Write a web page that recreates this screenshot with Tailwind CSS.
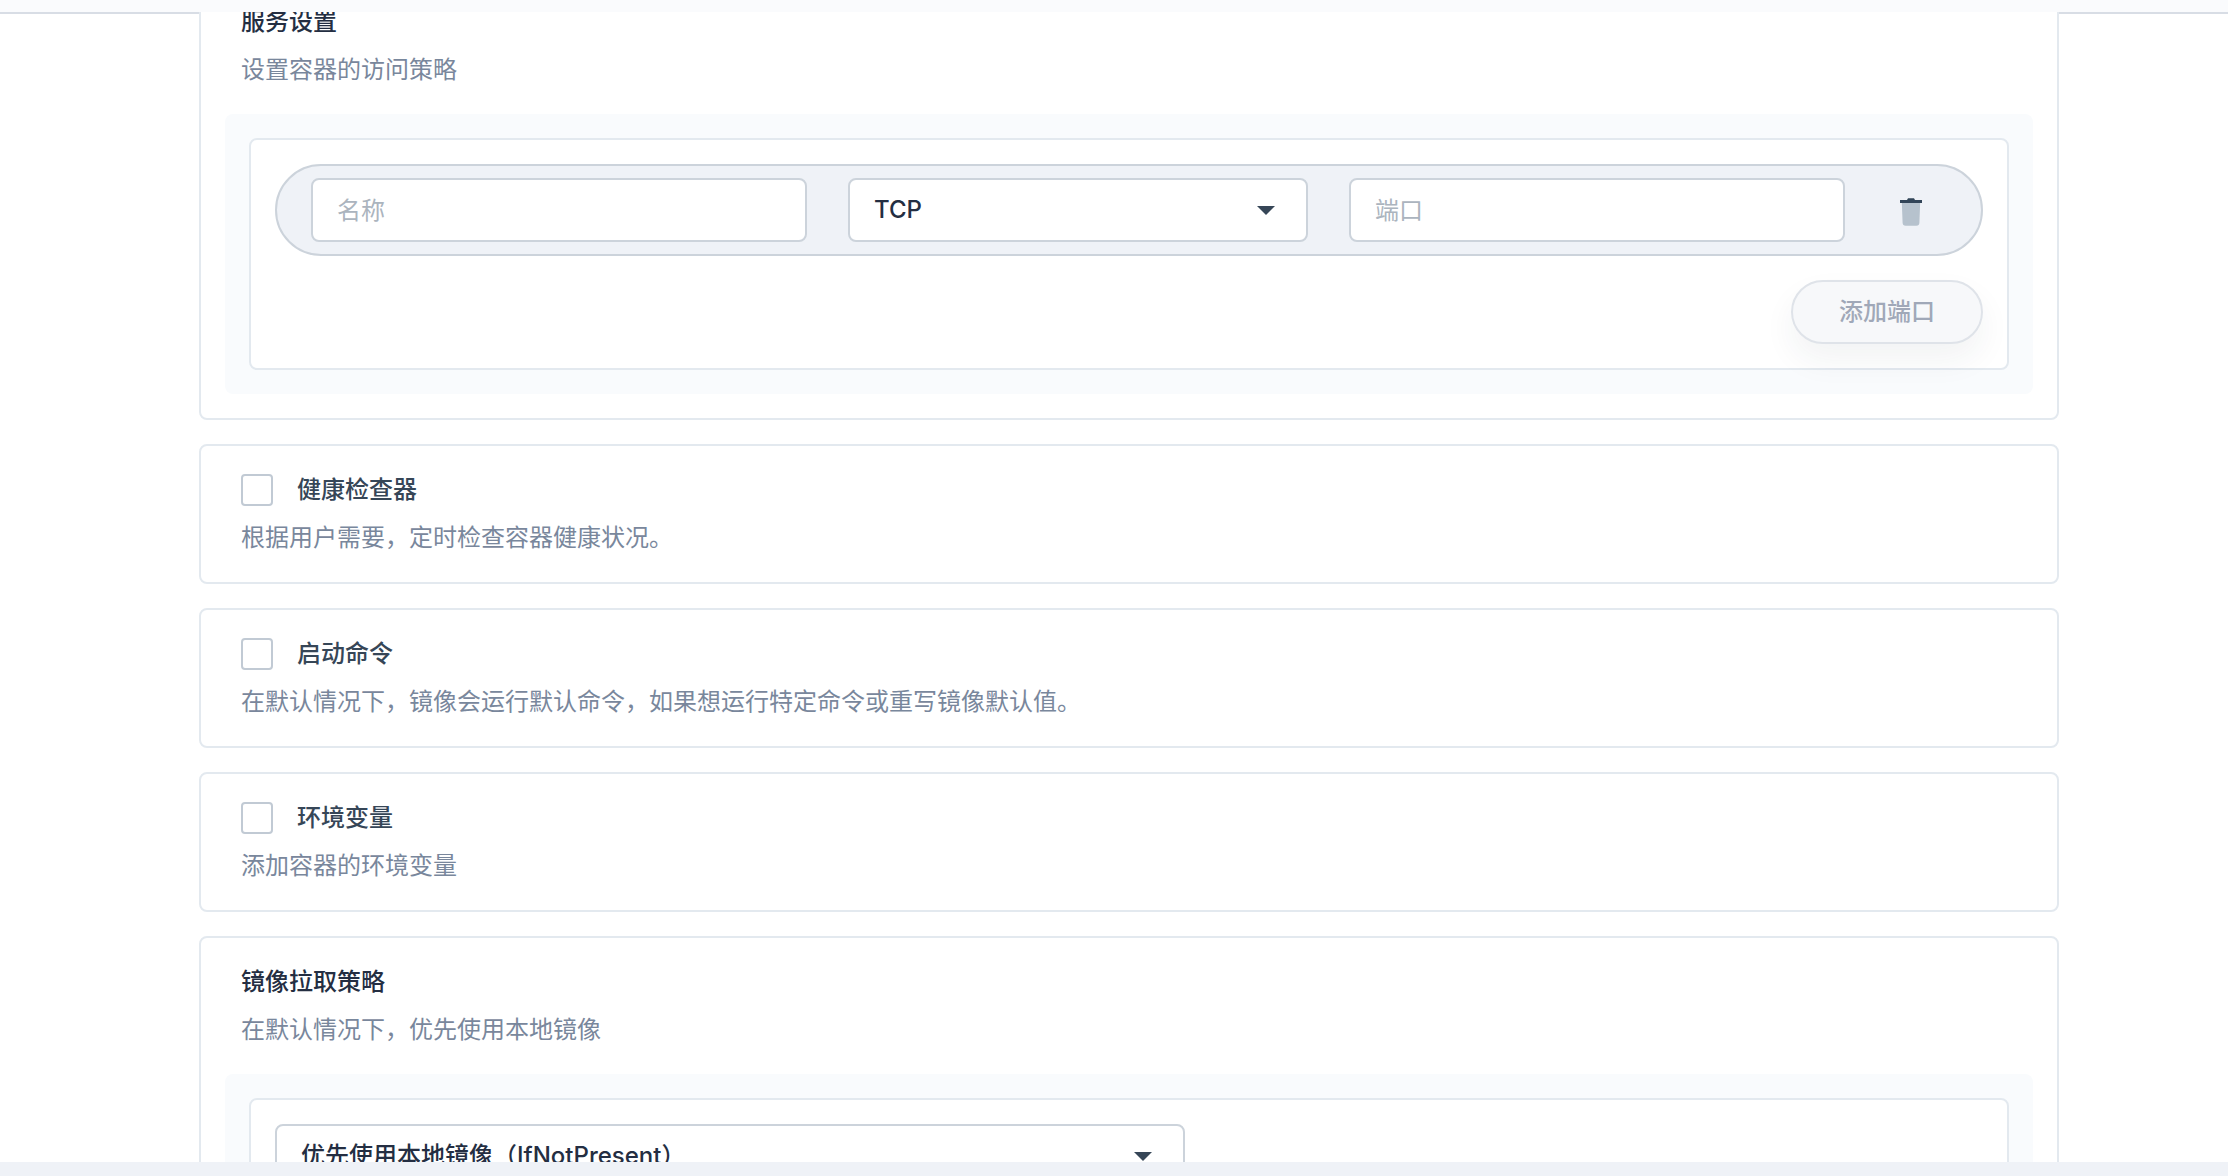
<!DOCTYPE html>
<html lang="zh-CN">
<head>
<meta charset="utf-8">
<meta name="viewport" content="width=device-width, initial-scale=1">
<title>容器设置</title>
<script src="https://cdn.jsdelivr.net/npm/@tailwindcss/browser@4"></script>
</head>
<body class="flex h-screen flex-col overflow-hidden bg-[#eff2f7] font-[Inter,'Noto_Sans_CJK_SC',sans-serif] text-2xl/8 text-[#242e42]">
  <header class="h-3 shrink-0 bg-[#fafbfd]"></header>
  <main class="min-h-0 flex-1 overflow-hidden bg-white">
    <div class="h-0.5 bg-[#d8dde5]"></div>
    <form class="-mt-[38px] mr-[169px] ml-[199px] flex flex-col gap-6">

      <section class="rounded-lg border-2 border-[#e3e9ef] bg-white px-6 pt-7 pb-6">
        <h2 class="px-4 font-medium">服务设置</h2>
        <p class="mt-4 px-4 text-[#79879c]">设置容器的访问策略</p>
        <div class="mt-7 rounded-lg bg-[#f9fbfd] p-6">
          <div class="flex flex-col gap-6 rounded-lg border-2 border-[#e3e9ef] bg-white p-6">
            <div class="grid grid-cols-[minmax(0,496fr)_minmax(0,460fr)_minmax(0,496fr)_50px] items-center gap-[41px] rounded-full border-2 border-[#ccd3db] bg-[#eff2f7] py-3 pr-[45px] pl-[34px]">
              <input type="text" aria-label="名称" placeholder="名称" class="h-16 w-full rounded-lg border-2 border-[#ccd3db] bg-white px-6 placeholder:text-[#abb4be]">
              <div class="relative">
                <select aria-label="协议" class="h-16 w-full appearance-none rounded-lg border-2 border-[#ccd3db] bg-white px-6 font-medium">
                  <option>TCP</option>
                  <option>UDP</option>
                </select>
                <svg class="pointer-events-none absolute top-7 right-8 h-[10px] w-5" viewBox="0 0 20 10" aria-hidden="true"><path d="M1 0h18l-9 9z" fill="#364657"/></svg>
              </div>
              <input type="text" aria-label="端口" placeholder="端口" class="h-16 w-full rounded-lg border-2 border-[#ccd3db] bg-white px-6 placeholder:text-[#abb4be]">
              <button type="button" aria-label="删除" class="flex h-16 items-center justify-center">
                <svg class="size-8" viewBox="0 0 32 32" aria-hidden="true">
                  <path d="M6.800 8h18.400l-.8 20.800a3 3 0 0 1-3 2.900H10.600a3 3 0 0 1-3-2.900z" fill="#b6c2cd"/>
                  <path d="M5 6h7l1-1.800h6L20 6h7v3H5z" fill="#324558"/>
                </svg>
              </button>
            </div>
            <button type="button" disabled class="h-16 self-end rounded-full border-2 border-[#dfe3e9] bg-[#f7f8fa] px-[46px] font-medium text-[#a0a8b8] shadow-[0_16px_32px_0_rgb(35_45_65/0.06)]">添加端口</button>
          </div>
        </div>
      </section>

      <section class="rounded-lg border-2 border-[#e3e9ef] bg-white px-10 py-7">
        <label class="flex items-center gap-6 font-medium text-[#364657]">
          <input type="checkbox" class="size-8 appearance-none rounded border-2 border-[#c1cad4] bg-white checked:bg-[#364657]">
          健康检查器
        </label>
        <p class="mt-4 text-[#79879c]">根据用户需要，定时检查容器健康状况。</p>
      </section>

      <section class="rounded-lg border-2 border-[#e3e9ef] bg-white px-10 py-7">
        <label class="flex items-center gap-6 font-medium text-[#364657]">
          <input type="checkbox" class="size-8 appearance-none rounded border-2 border-[#c1cad4] bg-white checked:bg-[#364657]">
          启动命令
        </label>
        <p class="mt-4 text-[#79879c]">在默认情况下，镜像会运行默认命令，如果想运行特定命令或重写镜像默认值。</p>
      </section>

      <section class="rounded-lg border-2 border-[#e3e9ef] bg-white px-10 py-7">
        <label class="flex items-center gap-6 font-medium text-[#364657]">
          <input type="checkbox" class="size-8 appearance-none rounded border-2 border-[#c1cad4] bg-white checked:bg-[#364657]">
          环境变量
        </label>
        <p class="mt-4 text-[#79879c]">添加容器的环境变量</p>
      </section>

      <section class="rounded-lg border-2 border-[#e3e9ef] bg-white px-6 pt-7 pb-6">
        <h2 class="px-4 font-medium">镜像拉取策略</h2>
        <p class="mt-4 px-4 text-[#79879c]">在默认情况下，优先使用本地镜像</p>
        <div class="mt-7 rounded-lg bg-[#f9fbfd] p-6">
          <div class="rounded-lg border-2 border-[#e3e9ef] bg-white p-6">
            <div class="relative w-[910px] max-w-full">
              <select aria-label="镜像拉取策略" class="h-16 w-full appearance-none rounded-lg border-2 border-[#ccd3db] bg-white px-6 font-medium">
                <option>优先使用本地镜像（IfNotPresent）</option>
              </select>
              <svg class="pointer-events-none absolute top-7 right-8 h-[10px] w-5" viewBox="0 0 20 10" aria-hidden="true"><path d="M1 0h18l-9 9z" fill="#364657"/></svg>
            </div>
          </div>
        </div>
      </section>

    </form>
  </main>
  <footer class="h-3.5 shrink-0 bg-[#eff2f7]"></footer>
</body>
</html>
